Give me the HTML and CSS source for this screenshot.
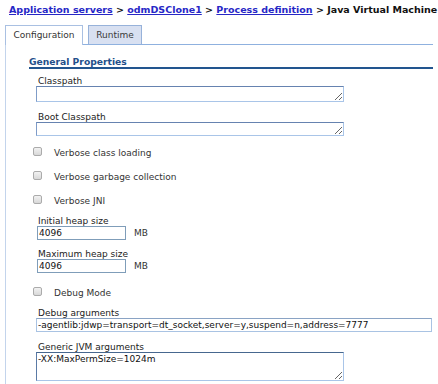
FILE: index.html
```html
<!DOCTYPE html>
<html lang="en">
<head>
  <meta charset="UTF-8">
  <title>Java Virtual Machine</title>
  <link rel="stylesheet" href="styles.css">
</head>
<body>

  <div class="crumbs">
    <a href="#">Application servers</a> &gt; <a href="#">odmDSClone1</a> &gt; <a href="#">Process definition</a> &gt; Java Virtual Machine
  </div>

  <div class="tabs">
    <span class="tab active">Configuration</span>
    <span class="tab runtime">Runtime</span>
  </div>

  <div class="panel">
    <h2 class="section">General Properties</h2>

    <div class="form">
      <div class="field first">
        <label>Classpath</label>
        <textarea class="area cp"></textarea>
      </div>
      <div class="field">
        <label>Boot Classpath</label>
        <textarea class="area boot"></textarea>
      </div>

      <div class="check first-check"><span class="box"></span>Verbose class loading</div>
      <div class="check"><span class="box"></span>Verbose garbage collection</div>
      <div class="check"><span class="box"></span>Verbose JNI</div>

      <div class="field heap">
        <label>Initial heap size</label>
        <div class="row"><input class="text small" value="4096"><span class="unit">MB</span></div>
      </div>
      <div class="field heap2">
        <label>Maximum heap size</label>
        <div class="row"><input class="text small" value="4096"><span class="unit">MB</span></div>
      </div>

      <div class="check debug"><span class="box"></span>Debug Mode</div>

      <div class="field dbgargs">
        <label>Debug arguments</label>
        <input class="text wide" value="-agentlib:jdwp=transport=dt_socket,server=y,suspend=n,address=7777">
      </div>
      <div class="field generic">
        <label>Generic JVM arguments</label>
        <textarea class="area jvm">-XX:MaxPermSize=1024m</textarea>
      </div>
    </div>
  </div>

</body>
</html>
```

FILE: styles.css
```css
body {
  margin: 0;
  font-family: "DejaVu Sans", Verdana, sans-serif;
  font-size: 9px;
  color: #222;
  background: #fff;
}

.crumbs {
  height: 25px;
  box-sizing: border-box;
  padding: 4px 0 0 9px;
  line-height: 11px;
  font-size: 9.5px;
  font-weight: bold;
  white-space: nowrap;
  color: #111;
}

.crumbs a {
  color: #2727c6;
  text-decoration: underline;
}

.tabs {
  display: flex;
  align-items: flex-end;
  gap: 5px;
  padding-left: 5px;
  height: 19px;
}

.tab {
  box-sizing: border-box;
  height: 19px;
  border: 1px solid #97b2da;
  border-bottom: none;
  line-height: 18px;
  text-align: center;
  color: #333;
}

.tab.active {
  width: 78px;
  height: 20px;
  margin-bottom: -1px;
  background: #fff;
  border-color: #a9c0e2;
  position: relative;
  z-index: 1;
}

.tab.runtime {
  width: 54px;
  background: #d8e0f1;
  color: #3a3a3a;
}

.panel {
  width: 428px;
  margin-left: 5px;
  box-sizing: border-box;
  border-top: 1px solid #8fb1df;
  border-left: 1px solid #c3d4ec;
  min-height: 340px;
}

.section {
  margin: 11px 0 0 23px;
  height: 11px;
  line-height: 11px;
  font-size: 9.2px;
  font-weight: bold;
  color: #24508a;
  border-bottom: 2px solid #22558f;
}

.form {
  margin-left: 30px;
  display: flex;
  flex-direction: column;
}

.field label {
  display: block;
  height: 10px;
  line-height: 10px;
  padding-left: 2px;
}

.field.first { margin-top: 7px; }
.field { margin-top: 10px; }
.field.heap { margin-top: 3px; }
.field.heap2 { margin-top: 9px; }
.field.dbgargs { margin-top: 3px; }

.area {
  display: block;
  margin: 0;
  padding: 1px 1px;
  box-sizing: border-box;
  width: 308px;
  font: inherit;
  color: #111;
  border: 1px solid #a9c5e8;
  border-top-color: #6683b0;
  border-left-color: #7f9cc8;
}

.area.cp { height: 16px; }
.area.boot { height: 14px; }
.area.jvm { height: 29px; border-top-color: #46678f; border-left-color: #5a7aa6; line-height: 10px; }

.check {
  display: flex;
  align-items: center;
  height: 24px;
  margin-left: -3px;
  line-height: 11px;
  color: #333;
}

.check.first-check { margin-top: 5px; }
.check.debug { margin-top: 8px; }

.box {
  width: 9px;
  height: 9px;
  box-sizing: border-box;
  margin: -3px 12px 0 0;
  border: 1px solid #ababab;
  border-radius: 2px;
  background: linear-gradient(#f2f2f2, #d8d8d8);
}

.row {
  display: flex;
  align-items: center;
}

.text {
  display: block;
  margin: 0;
  padding: 0 1px;
  box-sizing: border-box;
  height: 14px;
  font: inherit;
  color: #111;
  border: 1px solid #7f9db9;
  outline: none;
}

.text.small {
  width: 89px;
  margin-left: 1px;
}

.text.wide {
  width: 396px;
  border-color: #a9c3e3;
  border-top-color: #8aa3c4;
}

.unit {
  margin-left: 8px;
  color: #333;
}
```
